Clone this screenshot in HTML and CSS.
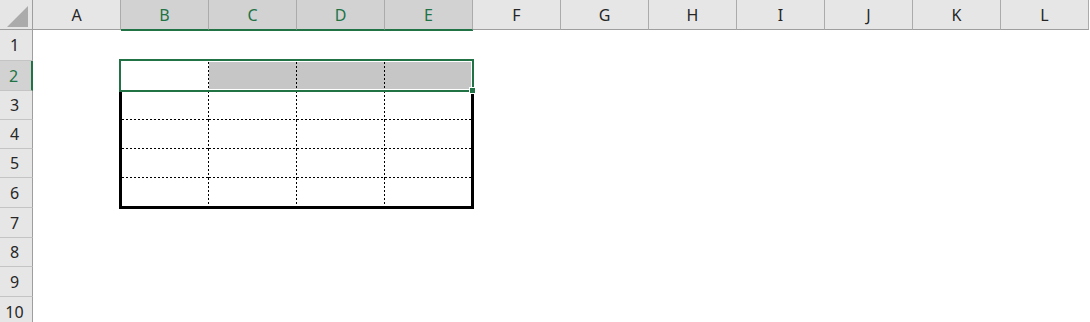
FILE: index.html
```html
<!DOCTYPE html>
<html>
    <head>
        <meta charset="UTF-8">
        <title>Planilha</title>
        <link rel="stylesheet" href="styles.css">
    </head>
    <body>
        <div class="sheet">
            <!-- canto + cabeçalho das colunas -->
            <div class="corner">
                <svg width="33" height="30" viewBox="0 0 33 30"><polygon points="8,28 29,28 29,7" fill="#ababab"/></svg>
            </div>
            <div class="col-head">A</div>
            <div class="col-head selected">B</div>
            <div class="col-head selected">C</div>
            <div class="col-head selected">D</div>
            <div class="col-head selected">E</div>
            <div class="col-head">F</div>
            <div class="col-head">G</div>
            <div class="col-head">H</div>
            <div class="col-head">I</div>
            <div class="col-head">J</div>
            <div class="col-head">K</div>
            <div class="col-head">L</div>

            <!-- números das linhas -->
            <div class="row-head">1</div>
            <div class="row-head selected">2</div>
            <div class="row-head">3</div>
            <div class="row-head">4</div>
            <div class="row-head">5</div>
            <div class="row-head">6</div>
            <div class="row-head">7</div>
            <div class="row-head">8</div>
            <div class="row-head">9</div>
            <div class="row-head">10</div>

            <!-- tabela B2:E6 -->
            <div class="table">
                <div class="cell"></div>
                <div class="cell marked"></div>
                <div class="cell marked"></div>
                <div class="cell marked last-col"></div>
                <div class="cell"></div>
                <div class="cell"></div>
                <div class="cell"></div>
                <div class="cell last-col"></div>
                <div class="cell"></div>
                <div class="cell"></div>
                <div class="cell"></div>
                <div class="cell last-col"></div>
                <div class="cell"></div>
                <div class="cell"></div>
                <div class="cell"></div>
                <div class="cell last-col"></div>
                <div class="cell last-row"></div>
                <div class="cell last-row"></div>
                <div class="cell last-row"></div>
                <div class="cell last-row last-col"></div>
                <div class="selection"><span class="handle"></span></div>
            </div>
        </div>
    </body>
</html>
```

FILE: styles.css
```css
body {
    margin: 0;
    background: #fff;
    overflow: hidden;
    font-family: "Noto Sans", "Open Sans", sans-serif;
}
.sheet {
    display: grid;
    grid-template-columns: 33px repeat(12, 88px) 1px;
    grid-template-rows: 30px 31px 30px 29px 29px 29px 30px 30px 29px 30px 30px;
}
.corner,
.col-head,
.row-head {
    background: #e6e6e6;
    box-sizing: border-box;
    display: flex;
    align-items: center;
    justify-content: center;
    font-size: 16px;
    color: #262626;
}
.corner {
    border-right: 1px solid #9e9e9e;
    border-bottom: 1px solid #9e9e9e;
}
.corner svg {
    display: block;
    margin: -1px 0 0 -1px;
}
.col-head {
    border-right: 1px solid #ababab;
    border-bottom: 1px solid #9e9e9e;
    padding-top: 1px;
}
.col-head.selected {
    background: #d2d2d2;
    color: #217346;
    border-bottom-color: #217346;
    box-shadow: 0 1px 0 #217346;
}
.row-head {
    grid-column: 1;
    border-right: 1px solid #9e9e9e;
    border-bottom: 1px solid #c4c4c4;
    padding-right: 3px;
}
.row-head.selected {
    background: #d2d2d2;
    color: #217346;
    border-right: 2px solid #217346;
    padding-right: 4px;
}
.table {
    grid-column: 3 / 7;
    grid-row: 3 / 8;
    margin: -2px -1px -1px -2px;
    border: 3px solid #000;
    position: relative;
    display: grid;
    grid-template-columns: 87px 88px 88px 1fr;
    grid-template-rows: 29px 29px 29px 29px 1fr;
}
/* linhas pontilhadas: 2px traço, 2px espaço */
.cell {
    --v: repeating-linear-gradient(to bottom, #000 0 2px, transparent 2px 4px);
    --h: repeating-linear-gradient(to right, #000 0 2px, transparent 2px 4px);
    background-image: var(--v), var(--h);
    background-size: 1px 100%, 100% 1px;
    background-position: right top, left bottom;
    background-repeat: no-repeat;
}
.cell.last-col {
    --v: none;
}
.cell.last-row {
    --h: none;
}
.cell.marked {
    background-color: #c6c6c6;
}
.selection {
    position: absolute;
    left: -3px;
    top: -3px;
    width: 355px;
    height: 33px;
    box-sizing: border-box;
    border: 2px solid #217346;
    box-shadow: inset 0 0 0 1px #fff;
}
.handle {
    position: absolute;
    right: -4px;
    bottom: -4px;
    width: 5px;
    height: 5px;
    background: #217346;
    border: 1px solid #fff;
}
```
